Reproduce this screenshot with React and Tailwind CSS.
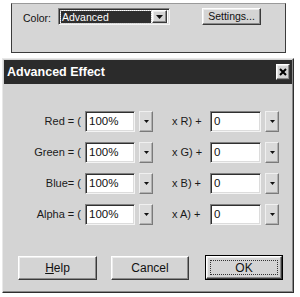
import React from "react";

const raised =
  "border border-t-white border-l-white border-r-[#3a3a3a] border-b-[#3a3a3a] shadow-[inset_-1px_-1px_0_#8a8a8a,inset_1px_1px_0_#ececec] bg-[#d4d4d4]";
const soft =
  "border border-t-[#f0f0f0] border-l-[#f0f0f0] border-r-[#7a7a7a] border-b-[#7a7a7a] shadow-[inset_-1px_-1px_0_#b0b0b0] bg-[#dadada]";
const sunken =
  "border border-t-[#808080] border-l-[#808080] border-r-[#f4f4f4] border-b-[#f4f4f4] shadow-[inset_1px_1px_0_#303030,inset_-1px_-1px_0_#dcdcdc] bg-white";

function Arrow({ small }) {
  return (
    <svg width={small ? 5 : 7} height={small ? 3 : 4} viewBox="0 0 7 4">
      <path d="M0 0 H7 L3.5 4 Z" fill="#111" />
    </svg>
  );
}

function DropBtn() {
  return (
    <div className={`w-[14px] h-[21px] flex items-center justify-center ${soft}`}>
      <Arrow small />
    </div>
  );
}

function Row({ label, value, right }) {
  return (
    <div className="flex items-center h-[21px]">
      <div className="w-[78px] text-right text-[11px] text-[#1a1a1a] pr-[1px] whitespace-pre">{label}</div>
      <div className={`ml-[3px] w-[50px] h-[21px] ${sunken} text-[11.5px] text-[#111] pl-[3px] leading-[16px] pt-[1px]`}>{value}</div>
      <div className="ml-[4px]">
        <DropBtn />
      </div>
      <div className="ml-[19px] w-[38px] text-[11px] text-[#1a1a1a] whitespace-pre">{right}</div>
      <div className={`w-[51px] h-[21px] ${sunken} text-[11.5px] text-[#111] pl-[3px] leading-[16px] pt-[1px]`}>0</div>
      <div className="ml-[4px]">
        <DropBtn />
      </div>
    </div>
  );
}

export default function App() {
  return (
    <div
      className="w-[300px] h-[297px] bg-white overflow-hidden"
      style={{ fontFamily: '"Liberation Sans", Arial, sans-serif' }}
    >
      {/* top panel */}
      <div className="ml-[11px] mt-[3px] w-[275px] h-[50px] bg-[#d6d6d6] border border-t-[#9a9a9a] border-l-[#3c3c3c] border-r-[#3c3c3c] border-b-[#3c3c3c] flex items-start pt-[4px]">
        <div className="ml-[11px] mt-[3px] text-[10.5px] text-[#111]">Color:</div>
        <div className={`ml-[7px] w-[112px] h-[17px] flex items-center ${sunken} pl-[2px] pr-[2px]`}>
          <div className="flex-1 h-[12px] bg-[#2e2e2e] outline-1 outline-dotted outline-[#cfcfcf] text-white text-[10.5px] leading-[12px] pl-[1px]">
            Advanced
          </div>
          <div className={`ml-[1px] w-[15px] h-[13px] flex items-center justify-center ${raised}`}>
            <Arrow />
          </div>
        </div>
        <div className={`ml-[32px] w-[59px] h-[17px] ${raised} text-[10.5px] text-[#111] flex items-center justify-center`}>
          Settings...
        </div>
      </div>

      {/* dialog */}
      <div className="ml-[2px] mt-[5px] w-[292px] h-[235px] bg-[#d4d4d4] border border-t-[#e8e8e8] border-l-[#e8e8e8] border-r-[#2e2e2e] border-b-[#2e2e2e] shadow-[inset_-1px_-1px_0_#8a8a8a] p-[1px] flex flex-col">
        <div className="h-[24px] bg-[#2b2b2b] flex items-center justify-between pl-[3px] pr-[2px]">
          <span className="text-white font-bold text-[12.5px]">Advanced Effect</span>
          <div className={`w-[14px] h-[16px] flex items-center justify-center ${raised}`}>
            <svg width="8" height="8" viewBox="0 0 8 8">
              <path d="M1 1 L7 7 M7 1 L1 7" stroke="#000" strokeWidth="2" />
            </svg>
          </div>
        </div>
        <div className="flex flex-col gap-[10px] pt-[27px]">
          <Row label="Red = (" value="100%" right="x R) +" />
          <Row label="Green = (" value="100%" right="x G) +" />
          <Row label="Blue= (" value="100%" right="x B) +" />
          <Row label="Alpha = (" value="100%" right="x A) +" />
        </div>
        <div className="flex items-center mt-[30px] pl-[14px]">
          <div className={`w-[79px] h-[24px] ${raised} flex items-center justify-center text-[12px] text-[#111]`}>
            <span>
              <span className="underline">H</span>elp
            </span>
          </div>
          <div className={`ml-[14px] w-[78px] h-[24px] ${raised} flex items-center justify-center text-[12px] text-[#111]`}>
            Cancel
          </div>
          <div className="ml-[16px] w-[78px] h-[25px] border border-black">
            <div className={`w-full h-full ${raised} flex items-center justify-center p-[3px]`}>
              <div className="w-full h-full border border-dotted border-[#333] flex items-center justify-center text-[12px] text-[#111]">
                OK
              </div>
            </div>
          </div>
        </div>
      </div>
    </div>
  );
}
